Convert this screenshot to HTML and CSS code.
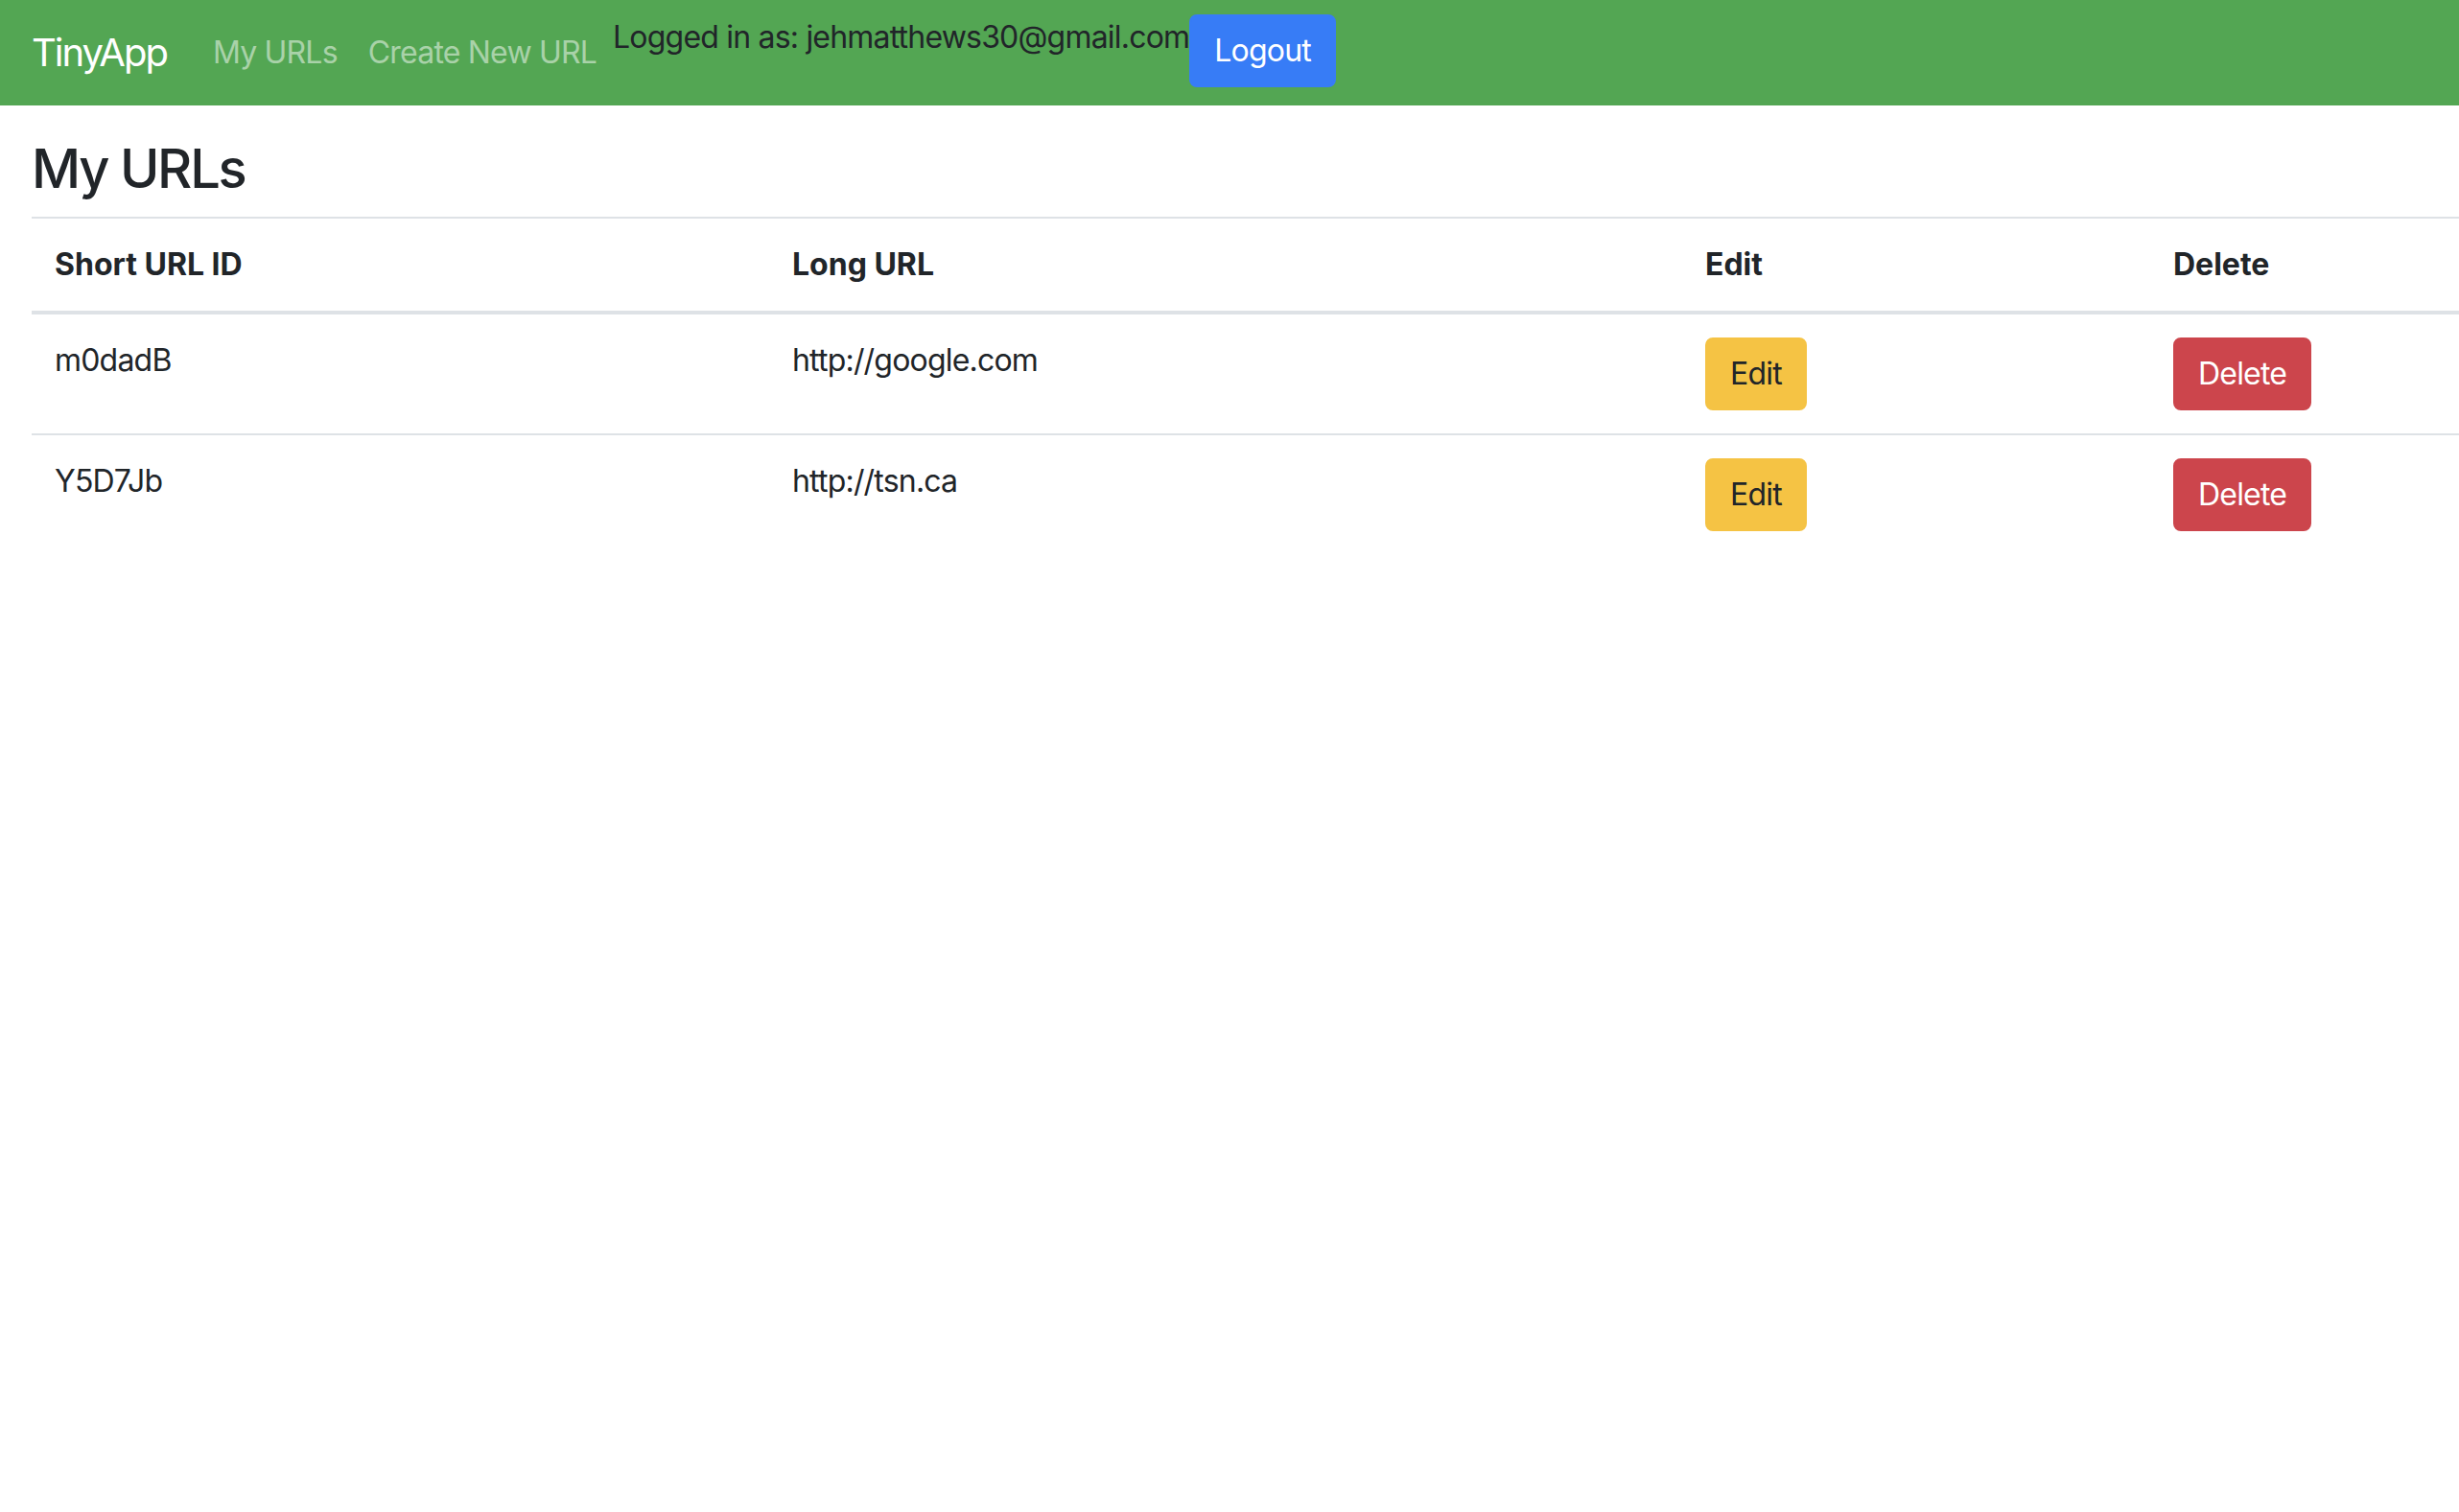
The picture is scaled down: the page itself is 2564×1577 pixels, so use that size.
FILE: index.html
```html
<!DOCTYPE html>
<html lang="en">
<head>
<meta charset="utf-8">
<title>TinyApp</title>
<link rel="stylesheet" href="styles.css">
</head>
<body>
<nav class="navbar">
  <a class="brand" href="#">TinyApp</a>
  <div class="nav-links">
    <a class="nav-link" href="#">My URLs</a>
    <a class="nav-link" href="#">Create New URL</a>
  </div>
  <form class="login-form">
    <span class="login-text">Logged in as: jehmatthews30@gmail.com</span>
    <button class="btn btn-primary" type="button">Logout</button>
  </form>
</nav>
<main class="main">
  <h3 class="title">My URLs</h3>
  <table class="table">
    <thead>
      <tr>
        <th class="col-short">Short URL ID</th>
        <th class="col-long">Long URL</th>
        <th class="col-edit">Edit</th>
        <th class="col-delete">Delete</th>
      </tr>
    </thead>
    <tbody>
      <tr>
        <td>m0dadB</td>
        <td>http://google.com</td>
        <td><button class="btn btn-warning" type="button">Edit</button></td>
        <td><button class="btn btn-danger" type="button">Delete</button></td>
      </tr>
      <tr>
        <td>Y5D7Jb</td>
        <td>http://tsn.ca</td>
        <td><button class="btn btn-warning" type="button">Edit</button></td>
        <td><button class="btn btn-danger" type="button">Delete</button></td>
      </tr>
    </tbody>
  </table>
</main>
</body>
</html>
```

FILE: styles.css
```css
* { box-sizing: border-box; }
html, body {
  margin: 0;
  padding: 0;
  background: #ffffff;
  overflow: hidden;
}
body {
  font-family: Inter, "Liberation Sans", Arial, sans-serif;
  font-size: 32px;
  line-height: 48px;
  letter-spacing: -0.025em;
  color: #212529;
}
.navbar {
  display: flex;
  align-items: flex-start;
  height: 110px;
  padding: 15px 32px 0 33px;
  background: #53a653;
}
.brand {
  display: block;
  padding: 10px 0;
  margin-right: 32px;
  font-size: 40px;
  line-height: 60px;
  letter-spacing: -0.05em;
  color: #ffffff;
  text-decoration: none;
}
.nav-links {
  display: flex;
}
.nav-link {
  display: block;
  padding: 16px 16px;
  color: rgba(255, 255, 255, 0.5);
  text-decoration: none;
}
.login-form {
  display: flex;
  align-items: flex-start;
  margin: 0;
}
.login-text {
  display: block;
  margin-left: 1px;
}
.btn {
  display: inline-block;
  font-family: inherit;
  font-size: 32px;
  line-height: 48px;
  letter-spacing: -0.025em;
  padding: 12px 24px;
  border: 2px solid transparent;
  border-radius: 8px;
  cursor: pointer;
}
.btn-primary {
  background: #377cf6;
  border-color: #377cf6;
  color: #ffffff;
}
.btn-warning {
  background: #f5c344;
  border-color: #f5c344;
  color: #212529;
}
.btn-danger {
  background: #cc454c;
  border-color: #cc454c;
  color: #ffffff;
}
.main {
  padding: 33px 0 0 33px;
}
.title {
  margin: 0 0 16px 0;
  font-size: 56px;
  line-height: 67px;
  font-weight: 500;
  letter-spacing: -0.04em;
}
.table {
  width: 100%;
  border-collapse: collapse;
  table-layout: fixed;
}
.table th,
.table td {
  padding: 24px;
  text-align: left;
  vertical-align: top;
  border-top: 2px solid #dee2e6;
}
.table th {
  font-weight: 700;
  letter-spacing: 0;
  border-bottom: 4px solid #dee2e6;
}
.table thead + tbody tr:first-child td {
  border-top: none;
}
.col-short { width: 769px; }
.col-long { width: 952px; }
.col-edit { width: 488px; }
```
